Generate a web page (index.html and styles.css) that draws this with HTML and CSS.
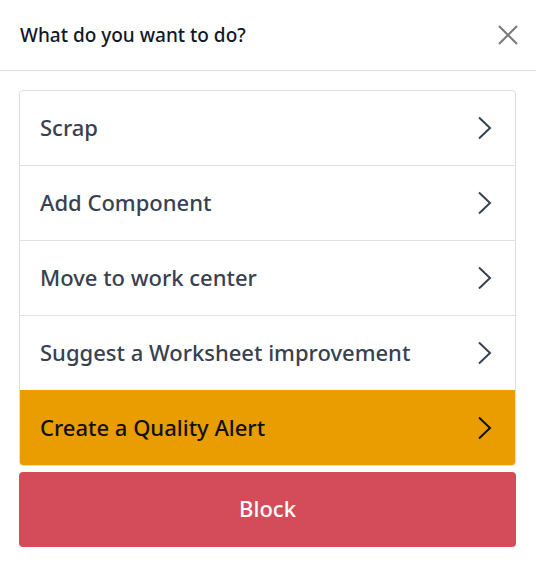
FILE: index.html
```html
<!DOCTYPE html>
<html>
<head>
<meta charset="utf-8">
<link rel="stylesheet" href="styles.css">
</head>
<body>
<div class="modal">
  <header class="modal-header">
    <h4 class="title">What do you want to do?</h4>
    <button class="close" aria-label="Close">
      <svg width="20" height="20" viewBox="0 0 20 20"><path d="M1 1 L19 19 M19 1 L1 19" stroke="#7a7a7a" stroke-width="2" fill="none"/></svg>
    </button>
  </header>
  <div class="modal-body">
    <ul class="list">
      <li class="item"><span>Scrap</span><svg class="chev" width="16" height="24" viewBox="0 0 16 24"><path d="M2 1.5 L13 12 L2 22.5" stroke="currentColor" stroke-width="2" fill="none"/></svg></li>
      <li class="item"><span>Add Component</span><svg class="chev" width="16" height="24" viewBox="0 0 16 24"><path d="M2 1.5 L13 12 L2 22.5" stroke="currentColor" stroke-width="2" fill="none"/></svg></li>
      <li class="item"><span>Move to work center</span><svg class="chev" width="16" height="24" viewBox="0 0 16 24"><path d="M2 1.5 L13 12 L2 22.5" stroke="currentColor" stroke-width="2" fill="none"/></svg></li>
      <li class="item"><span>Suggest a Worksheet improvement</span><svg class="chev" width="16" height="24" viewBox="0 0 16 24"><path d="M2 1.5 L13 12 L2 22.5" stroke="currentColor" stroke-width="2" fill="none"/></svg></li>
      <li class="item warning"><span>Create a Quality Alert</span><svg class="chev" width="16" height="24" viewBox="0 0 16 24"><path d="M2 1.5 L13 12 L2 22.5" stroke="currentColor" stroke-width="2" fill="none"/></svg></li>
    </ul>
    <button class="block-btn">Block</button>
  </div>
</div>
</body>
</html>
```
FILE: styles.css
```css
* { box-sizing: border-box; }
html, body { margin: 0; padding: 0; }
body {
  background: #fff;
  font-family: "Noto Sans", "Open Sans", sans-serif;
  width: 536px;
  height: 567px;
  overflow: hidden;
}
.modal {
  background: #fff;
  width: 536px;
  height: 567px;
}
.modal-header {
  height: 71px;
  border-bottom: 1px solid #dee2e6;
  display: flex;
  align-items: center;
  justify-content: space-between;
  padding: 0 18px 0 20px;
}
.title {
  margin: 0 0 1px 0;
  font-size: 19px;
  font-weight: 500;
  color: #111827;
}
.close {
  border: 0;
  background: none;
  padding: 0;
  display: flex;
}
.modal-body {
  padding: 19px 20px 0 19px;
}
.list {
  list-style: none;
  margin: 0;
  padding: 0;
  border: 1px solid #dcdfe3;
  border-radius: 4px;
  overflow: hidden;
}
.item {
  height: 75px;
  display: flex;
  align-items: center;
  justify-content: space-between;
  padding: 0 22px 0 20px;
  border-bottom: 1px solid #dcdfe3;
  font-size: 22px;
  font-weight: 500;
  color: #374151;
}
.item span { margin-top: -2px; }
.item:last-child { border-bottom: 0; }
.item.warning {
  background: #e99d00;
  color: #111;
  margin: -1px -1px -1px -1px;
  height: 76px;
  padding-left: 21px;
  padding-right: 23px;
}
.chev { display: block; }
.block-btn {
  display: block;
  width: 100%;
  margin-top: 6px;
  height: 75px;
  padding-bottom: 4px;
  border: 0;
  border-radius: 4px;
  background: #d44c59;
  color: #fff;
  font-family: inherit;
  font-size: 22px;
  font-weight: 500;
}
```
